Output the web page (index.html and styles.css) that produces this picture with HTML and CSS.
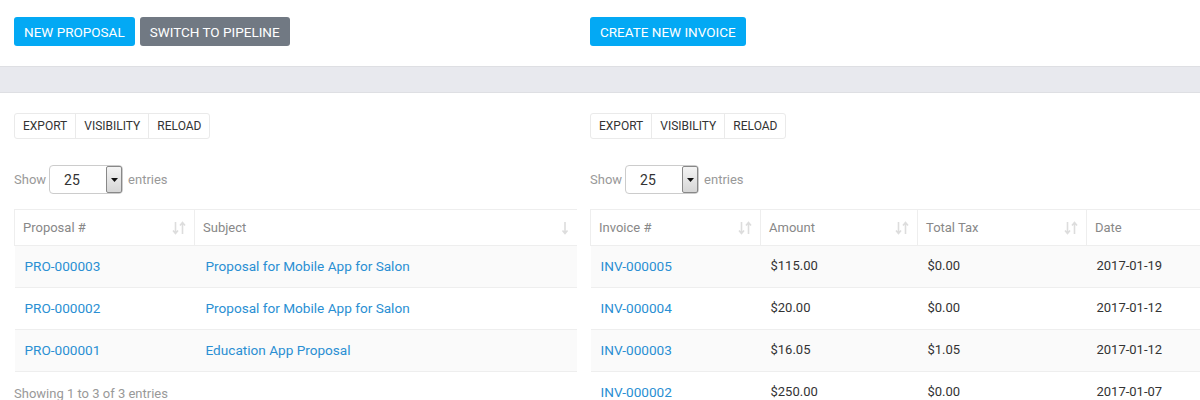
FILE: index.html
```html
<!DOCTYPE html>
<html>
<head>
<meta charset="utf-8">
<link rel="stylesheet" href="styles.css">
</head>
<body>
<div class="top">
  <div class="half">
    <span class="btn btn-blue">New Proposal</span>
    <span class="btn btn-gray">Switch to Pipeline</span>
  </div>
  <div class="half">
    <span class="btn btn-blue">Create New Invoice</span>
  </div>
</div>
<div class="band"></div>
<div class="panels">
  <div class="panel">
    <div class="tools"><span>Export</span><span>Visibility</span><span>Reload</span></div>
    <div class="show">Show <span class="select"><span class="val">25</span><span class="arr"><svg width="7" height="4" viewBox="0 0 7 4"><path d="M0 0h7L3.5 4z" fill="#111"/></svg></span></span> entries</div>
    <table class="tbl left">
      <colgroup><col class="c180"><col class="c382"></colgroup>
      <thead><tr>
        <th><div class="th">Proposal #<svg class="sort" width="14" height="14" viewBox="0 0 14 14"><path d="M3.5 1v11M1 9.5l2.5 3 2.5-3M10.5 13V2M8 4.5l2.5-3 2.5 3" stroke="#ddd" stroke-width="1.6" fill="none"/></svg></div></th>
        <th><div class="th">Subject<svg class="sort" width="8" height="14" viewBox="0 0 8 14"><path d="M4 1v11M1.5 9.5l2.5 3 2.5-3" stroke="#ddd" stroke-width="1.6" fill="none"/></svg></div></th>
      </tr></thead>
      <tbody>
        <tr><td><a>PRO-000003</a></td><td><a>Proposal for Mobile App for Salon</a></td></tr>
        <tr><td><a>PRO-000002</a></td><td><a>Proposal for Mobile App for Salon</a></td></tr>
        <tr><td><a>PRO-000001</a></td><td><a>Education App Proposal</a></td></tr>
      </tbody>
    </table>
    <div class="info">Showing 1 to 3 of 3 entries</div>
  </div>
  <div class="panel">
    <div class="tools"><span>Export</span><span>Visibility</span><span>Reload</span></div>
    <div class="show">Show <span class="select"><span class="val">25</span><span class="arr"><svg width="7" height="4" viewBox="0 0 7 4"><path d="M0 0h7L3.5 4z" fill="#111"/></svg></span></span> entries</div>
    <table class="tbl right">
      <colgroup><col class="c170"><col class="c157"><col class="c169"><col class="c160"></colgroup>
      <thead><tr>
        <th><div class="th">Invoice #<svg class="sort" width="14" height="14" viewBox="0 0 14 14"><path d="M3.5 1v11M1 9.5l2.5 3 2.5-3M10.5 13V2M8 4.5l2.5-3 2.5 3" stroke="#ddd" stroke-width="1.6" fill="none"/></svg></div></th>
        <th><div class="th">Amount<svg class="sort" width="14" height="14" viewBox="0 0 14 14"><path d="M3.5 1v11M1 9.5l2.5 3 2.5-3M10.5 13V2M8 4.5l2.5-3 2.5 3" stroke="#ddd" stroke-width="1.6" fill="none"/></svg></div></th>
        <th><div class="th">Total Tax<svg class="sort" width="14" height="14" viewBox="0 0 14 14"><path d="M3.5 1v11M1 9.5l2.5 3 2.5-3M10.5 13V2M8 4.5l2.5-3 2.5 3" stroke="#ddd" stroke-width="1.6" fill="none"/></svg></div></th>
        <th><div class="th">Date</div></th>
      </tr></thead>
      <tbody>
        <tr><td><a>INV-000005</a></td><td>$115.00</td><td>$0.00</td><td>2017-01-19</td></tr>
        <tr><td><a>INV-000004</a></td><td>$20.00</td><td>$0.00</td><td>2017-01-12</td></tr>
        <tr><td><a>INV-000003</a></td><td>$16.05</td><td>$1.05</td><td>2017-01-12</td></tr>
        <tr><td><a>INV-000002</a></td><td>$250.00</td><td>$0.00</td><td>2017-01-07</td></tr>
      </tbody>
    </table>
  </div>
</div>
</body>
</html>
```
FILE: styles.css
```css
html, body {
  margin: 0;
  padding: 0;
  background: #fff;
  overflow: hidden;
  width: 1200px;
  height: 400px;
  font-family: Roboto, "Liberation Sans", sans-serif;
  font-size: 13px;
  color: #333;
}
.top {
  display: flex;
  gap: 14px;
  padding: 17px 0 0 14px;
  height: 66px;
  box-sizing: border-box;
}
.half {
  width: 562px;
  display: flex;
  gap: 5px;
  align-items: flex-start;
}
.btn {
  display: inline-flex;
  align-items: center;
  height: 29px;
  padding: 0 10px;
  border-radius: 3px;
  color: #fff;
  text-transform: uppercase;
  font-size: 13.5px;
  box-sizing: border-box;
}
.btn-blue { background: #03a9f4; }
.btn-gray { background: #717983; }
.band {
  height: 27px;
  background: #e8e9ee;
  border-top: 1px solid #dedfe3;
  border-bottom: 1px solid #dedfe3;
  box-sizing: border-box;
}
.panels {
  display: flex;
  gap: 14px;
  padding: 20px 0 0 14px;
}
.panel {
  width: 562px;
  flex: none;
}
.tools {
  display: inline-flex;
  border: 1px solid #eaeaea;
  border-radius: 3px;
  height: 26px;
  box-sizing: border-box;
}
.tools span {
  display: flex;
  align-items: center;
  padding: 0 8px;
  font-size: 12px;
  text-transform: uppercase;
  color: #333;
  border-left: 1px solid #eaeaea;
}
.tools span:first-child { border-left: none; }
.show {
  margin-top: 26px;
  display: flex;
  align-items: center;
  color: #999;
  font-size: 13px;
  height: 29px;
}
.select {
  display: flex;
  align-items: center;
  justify-content: space-between;
  width: 74px;
  height: 29px;
  border: 1px solid #ccc;
  border-radius: 4px;
  box-sizing: border-box;
  padding: 0 0 0 14px;
  color: #333;
  font-size: 14px;
  margin: 0 5px 0 3px;
}
.arr {
  display: flex;
  align-items: center;
  justify-content: center;
  width: 16px;
  height: 27px;
  box-sizing: border-box;
  border: 1px solid #888;
  border-radius: 2px;
  background: linear-gradient(#f4f4f4, #d6d6d6);
}
.tbl {
  margin-top: 15px;
  border-collapse: collapse;
  table-layout: fixed;
}
.tbl.left { width: 562px; }
.tbl.right { width: 656px; }
.c180 { width: 180px; }
.c382 { width: 382px; }
.c170 { width: 170px; }
.c157 { width: 157px; }
.c169 { width: 169px; }
.c160 { width: 160px; }
.tbl th {
  height: 36px;
  padding: 0 8px 0 8px;
  border-top: 1px solid #eee;
  border-left: 1px solid #eee;
  border-bottom: 1px solid #eee;
  font-weight: normal;
  color: #888;
  text-align: left;
  box-sizing: border-box;
}
.th {
  display: flex;
  align-items: center;
  justify-content: space-between;
}
.tbl td {
  height: 42px;
  padding: 0 10px 1px;
  border-bottom: 1px solid #eee;
  box-sizing: border-box;
  white-space: nowrap;
  color: #333;
  line-height: 16px;
}
.tbl tbody tr:nth-child(odd) td { background: #fafafa; }
.tbl a { color: #2a8fd3; font-size: 13.6px; line-height: 16px; }
.tbl.left td { padding-left: 10px; }
.tbl.left td:nth-child(2) { padding-left: 11px; }
.info {
  margin-top: 14px;
  color: #999;
  font-size: 13px;
}
```
